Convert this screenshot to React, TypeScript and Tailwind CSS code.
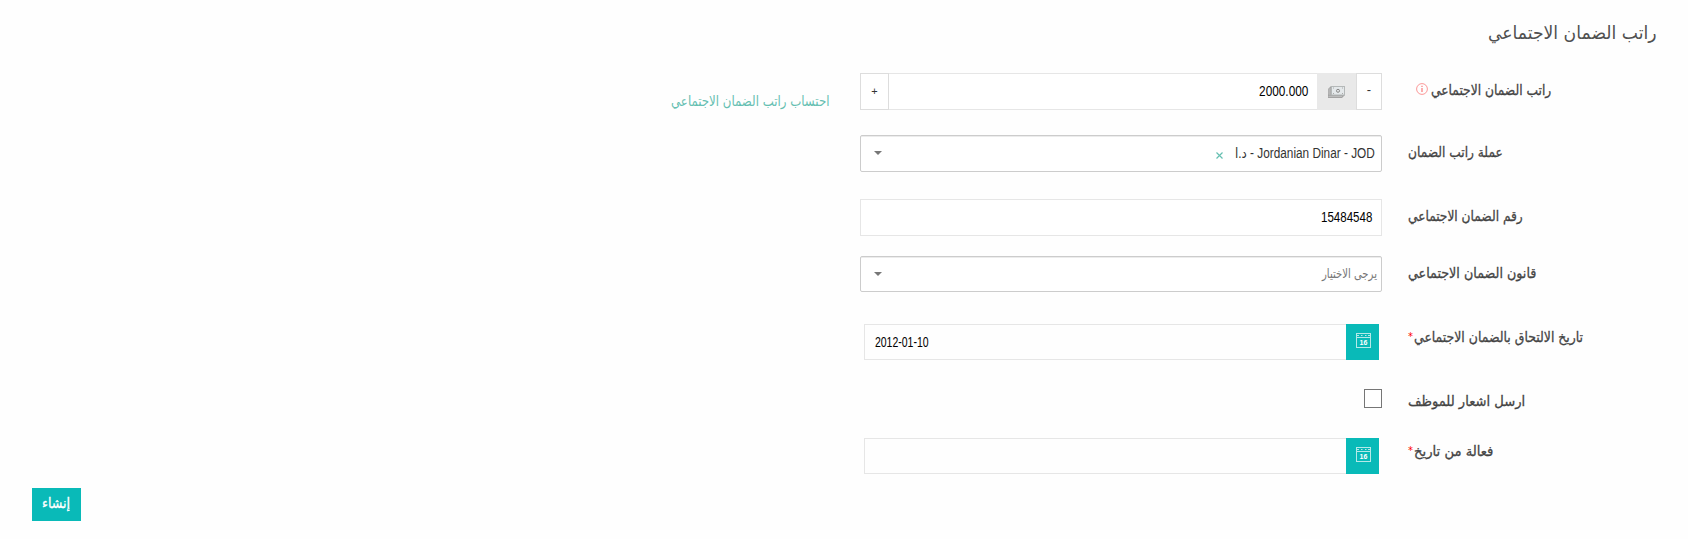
import { useLayoutEffect, useRef, useState } from 'react';
import type { ReactNode } from 'react';
import { clsx } from 'clsx';

type FitTextProps = {
  children: ReactNode;
  width: number;
  className?: string;
};

// Condenses a single line of text to the given width.
function FitText({ children, width, className }: FitTextProps) {
  const ref = useRef<HTMLSpanElement>(null);
  const [scale, setScale] = useState(1);

  useLayoutEffect(() => {
    if (!ref.current) return;
    setScale(width / ref.current.offsetWidth);
  }, [width]);

  return (
    <span className={clsx('flex shrink-0 justify-start whitespace-nowrap', className)} style={{ width }}>
      <span ref={ref} className="block shrink-0 origin-right" style={{ transform: `scaleX(${scale})` }}>
        {children}
      </span>
    </span>
  );
}

type LabelProps = {
  text: string;
  width: number;
  required?: boolean;
  className?: string;
  children?: ReactNode;
};

function Label({ text, width, required, className, children }: LabelProps) {
  return (
    <label className={clsx('flex w-[247px] shrink-0 justify-end text-sm leading-5 text-[#444]', className)}>
      <FitText width={width} className="[-webkit-text-stroke:0.3px_#444]">{text}</FitText>
      {required && <span className="mr-px w-[5px] pt-0.5 text-[10px] leading-4 text-[#f00]">*</span>}
      {children}
    </label>
  );
}

function InfoIcon() {
  return (
    <svg className="mr-[3px] mt-[3px] size-3" viewBox="0 0 12 12" fill="none" stroke="#fb8c8c">
      <circle cx="6" cy="6" r="5.4" strokeWidth="0.9" />
      <path d="M6 5v4M6 2.8v1.2" strokeWidth="1.4" />
    </svg>
  );
}

function MoneyIcon() {
  return (
    <svg className="mr-px h-3 w-[17px]" viewBox="0 0 17 12">
      <path d="M3 0h14v9l-3 3H0V3z" fill="#a3a3a3" />
      <path d="M0.5 10.5h13.5M1 8.5V3M2 9.5V2" stroke="#bcbcbc" fill="none" />
      <rect x="3.5" y="0.5" width="13" height="8.5" fill="#e4e8ea" stroke="#b4b8b8" />
      <circle cx="10" cy="4.8" r="1.5" fill="none" stroke="#888" />
      <path d="M5 2h1M14 2h1M5 7.5h1M14 7.5h1" stroke="#aaa" />
    </svg>
  );
}

function CalendarIcon() {
  return (
    <svg className="-mr-px h-[15px] w-[15px]" viewBox="0 0 15 15" fill="none">
      <rect x="0.5" y="0.5" width="14" height="14" stroke="#b5e9e8" />
      <path d="M1 4.5h13" stroke="#b5e9e8" />
      <path d="M1 2.5h2M5 2.5h1.5M9 2.5h1.5M12 2.5h2" stroke="#b5e9e8" />
      <text x="7.5" y="11.6" textAnchor="middle" fontFamily="Liberation Sans, sans-serif" fontSize="7" fontWeight="bold" fill="#fff">
        16
      </text>
    </svg>
  );
}

function Caret() {
  return (
    <svg className="mb-px ml-[13px] h-1 w-2" viewBox="0 0 8 4">
      <path d="M0 0h8L4 4z" fill="#777" />
    </svg>
  );
}

function SelectBox({ className, children }: { className?: string; children: ReactNode }) {
  return (
    <div
      className={clsx(
        'flex w-[522px] items-center justify-between rounded-[2px] border border-[#ccc] bg-white shadow-[inset_0_1px_0_#ececec]',
        className,
      )}
    >
      {children}
    </div>
  );
}

function DateField({ value }: { value?: string }) {
  return (
    <div className="mr-[3px] flex h-9 w-[515px]">
      <button type="button" className="flex w-[33px] justify-center bg-[#09bab8] pt-[9px]">
        <CalendarIcon />
      </button>
      <div className="flex flex-1 items-center justify-end border border-r-0 border-[#e6e6e6] pl-2.5 font-['Liberation_Sans',sans-serif] text-sm text-black">
        {value && <FitText width={54}>{value}</FitText>}
      </div>
    </div>
  );
}

function Row({ className, children }: { className?: string; children: ReactNode }) {
  return <div className={clsx('flex items-start gap-[26px]', className)}>{children}</div>;
}

export default function App() {
  return (
    <main
      dir="rtl"
      className="h-[539px] w-[1688px] overflow-hidden bg-[#fefefe] px-[33px] pt-5 font-['DejaVu_Sans','Liberation_Sans',sans-serif]"
    >
      <h1 className="-mr-px flex h-[53px] pt-px text-lg leading-6 text-[#505050]">
        <FitText width={168}>راتب الضمان الاجتماعي</FitText>
      </h1>

      <Row className="h-[37px]">
        <Label text="راتب الضمان الاجتماعي" width={120} className="pl-2 pt-[7px]">
          <InfoIcon />
        </Label>
        <div className="flex h-[37px] w-[522px] bg-white text-black">
          <button type="button" className="flex w-[26px] items-center justify-center border border-[#ddd] pb-[3px] font-['Liberation_Sans',sans-serif] text-[13px] text-[#333]">
            -
          </button>
          <span className="flex w-[39px] items-center justify-center bg-[#e9e9e9]">
            <MoneyIcon />
          </span>
          <div className="flex flex-1 items-center border-y border-[#e6e6e6] pb-0.5 pr-[9px] font-['Liberation_Sans',sans-serif] text-sm">
            <FitText width={49}>2000.000</FitText>
          </div>
          <button type="button" className="flex w-[29px] items-center justify-center border border-[#ddd] font-['Liberation_Sans',sans-serif] text-[11px] text-[#333]">
            +
          </button>
        </div>
        <a href="#calculate" className="mr-[5px] pt-[18px] text-sm leading-5 text-[#65bfb1]">
          <FitText width={158}>احتساب راتب الضمان الاجتماعي</FitText>
        </a>
      </Row>

      <Row className="mt-[25px]">
        <Label text="عملة راتب الضمان" width={95} className="pt-[7px]" />
        <SelectBox className="h-[37px] pr-1.5">
          <div className="flex items-center gap-3 pb-0.5 font-['Liberation_Sans','DejaVu_Sans',sans-serif] text-sm text-[#333]">
            <FitText width={140}>Jordanian Dinar - JOD - د.ا</FitText>
            <svg className="mt-1.5 size-[7px]" viewBox="0 0 7 7" stroke="#65bfb1" strokeWidth="1.2">
              <path d="M0.5 0.5l6 6M6.5 0.5l-6 6" />
            </svg>
          </div>
          <Caret />
        </SelectBox>
      </Row>

      <Row className="mt-[27px]">
        <Label text="رقم الضمان الاجتماعي" width={115} className="pt-[7px]" />
        <div className="flex h-[37px] w-[522px] items-center border border-[#e6e6e6] bg-white pb-0.5 pr-[9px] font-['Liberation_Sans',sans-serif] text-sm text-black">
          <FitText width={51}>15484548</FitText>
        </div>
      </Row>

      <Row className="mt-5">
        <Label text="قانون الضمان الاجتماعي" width={128} className="pt-[7px]" />
        <SelectBox className="h-9 pr-1">
          <FitText width={55} className="text-[13px] text-[#777]">يرجى الاختيار</FitText>
          <Caret />
        </SelectBox>
      </Row>

      <Row className="mt-8">
        <Label text="تاريخ الالتحاق بالضمان الاجتماعي" width={169} required className="pt-[3px]" />
        <DateField value="2012-01-10" />
      </Row>

      <Row className="mt-[29px] h-[19px]">
        <Label text="ارسل اشعار للموظف" width={117} className="pt-0.5" />
        <span role="checkbox" aria-checked="false" className="h-[19px] w-[18px] border border-[#767676] bg-white" />
      </Row>

      <Row className="mt-[30px]">
        <Label text="فعالة من تاريخ" width={79} required className="pt-[3px]" />
        <DateField />
      </Row>

      <div className="-ml-px mt-3.5 flex justify-end">
        <button type="button" className="flex h-[33px] w-[49px] justify-center bg-[#09bab8] pt-[5px] text-sm leading-5 text-white [-webkit-text-stroke:0.3px_#fff]">
          <FitText width={28}>إنشاء</FitText>
        </button>
      </div>
    </main>
  );
}
